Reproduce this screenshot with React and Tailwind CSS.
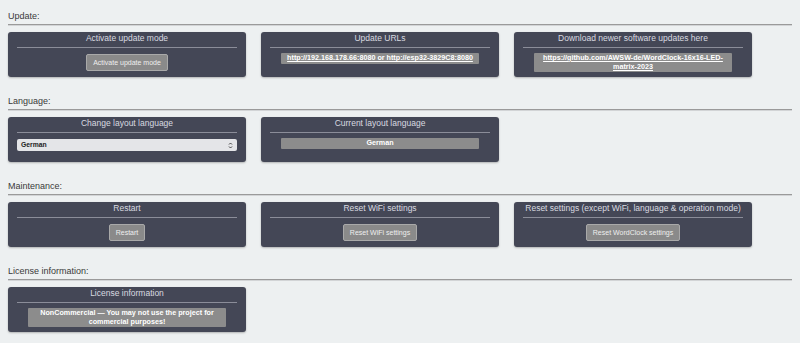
import React from "react";

const font = { fontFamily: '"Liberation Sans", Arial, sans-serif' };

function Section({ title, children }) {
  return (
    <div className="mb-[18px]">
      <div className="h-[12px] text-[9px] leading-[12px] text-[#3a3a3a]">{title}</div>
      <div className="mt-[2px] h-[2px] border-t border-t-[#9a9a9a] border-b border-b-[#d2d4d6]" />
      <div className="mt-[6px] grid grid-cols-[238px_238px_238px] gap-x-[15px]">{children}</div>
    </div>
  );
}

function Card({ title, children }) {
  return (
    <div className="flex h-[45px] flex-col rounded-[3px] bg-[#444756] px-[9px] pt-[1px] shadow-[0_1px_2px_rgba(0,0,0,0.25)]">
      <div className="h-[11px] text-center text-[8.5px] leading-[11px] text-[#d9dae0]">{title}</div>
      <div className="mt-[3px] h-px bg-[#8b8d99]" />
      <div className="flex justify-center pt-[5px]">{children}</div>
    </div>
  );
}

function Button({ children }) {
  return (
    <button className="mt-px h-[17px] rounded-[2px] border border-[#a9a9a9] bg-[#8a8a8a] px-[6px] text-[7px] leading-[15px] text-[#eeeeee]">
      {children}
    </button>
  );
}

function InfoBox({ children, underline }) {
  return (
    <div
      className={
        "w-[90%] rounded-[1px] bg-[#8c8c8c] px-[4px] py-[1px] text-center text-[7.2px] font-bold leading-[8.5px] text-white " +
        (underline ? "underline" : "")
      }
    >
      {children}
    </div>
  );
}

export default function App() {
  return (
    <div className="min-h-screen bg-[#edf0f1] px-[8px] pt-[10px]" style={font}>
      <Section title="Update:">
        <Card title="Activate update mode">
          <Button>Activate update mode</Button>
        </Card>
        <Card title="Update URLs">
          <InfoBox underline>http://192.168.178.66:8080 or http://esp32-3829C8:8080</InfoBox>
        </Card>
        <Card title="Download newer software updates here">
          <InfoBox underline>
            https://github.com/AWSW-de/WordClock-16x16-LED-
            <br />
            matrix-2023
          </InfoBox>
        </Card>
      </Section>

      <Section title="Language:">
        <Card title="Change layout language">
          <div className="mt-px flex h-[12px] w-full items-center justify-between rounded-[2px] bg-[#e4e5e8] px-[4px] text-[6.8px] font-bold text-[#222]">
            <span>German</span>
            <svg width="5" height="7" viewBox="0 0 5 7" fill="none" stroke="#333" strokeWidth="0.9">
              <path d="M1 2.5 L2.5 1 L4 2.5" />
              <path d="M1 4.5 L2.5 6 L4 4.5" />
            </svg>
          </div>
        </Card>
        <Card title="Current layout language">
          <InfoBox>German</InfoBox>
        </Card>
      </Section>

      <Section title="Maintenance:">
        <Card title="Restart">
          <Button>Restart</Button>
        </Card>
        <Card title="Reset WiFi settings">
          <Button>Reset WiFi settings</Button>
        </Card>
        <Card title="Reset settings (except WiFi, language & operation mode)">
          <Button>Reset WordClock settings</Button>
        </Card>
      </Section>

      <Section title="License information:">
        <Card title="License information">
          <InfoBox>
            NonCommercial — You may not use the project for
            <br />
            commercial purposes!
          </InfoBox>
        </Card>
      </Section>
    </div>
  );
}
